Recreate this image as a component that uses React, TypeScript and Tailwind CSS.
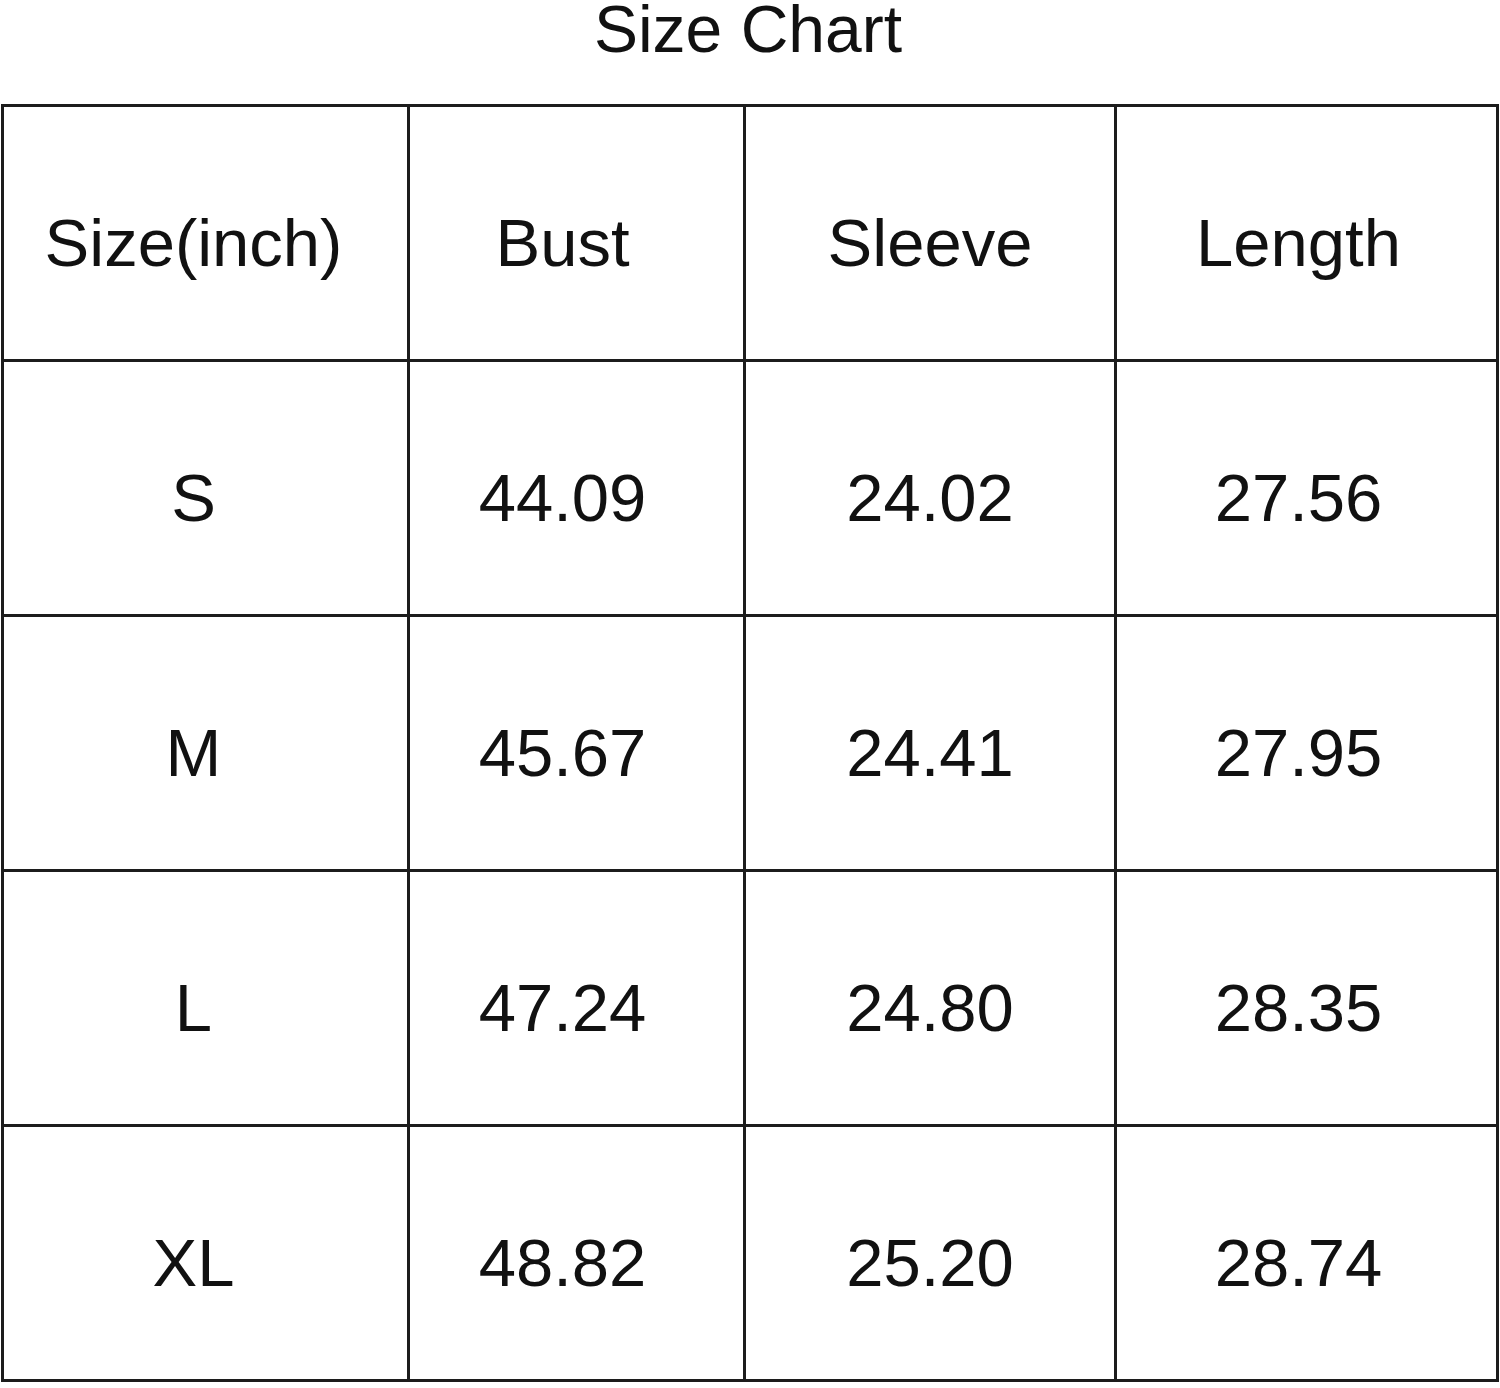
import React from "react";

const headers = ["Size(inch)", "Bust", "Sleeve", "Length"];

const rows = [
  ["S", "44.09", "24.02", "27.56"],
  ["M", "45.67", "24.41", "27.95"],
  ["L", "47.24", "24.80", "28.35"],
  ["XL", "48.82", "25.20", "28.74"],
];

// small nudges so each column's text sits where the chart has it
const colShift = ["pr-[24px]", "pr-[28px]", "pr-0", "pr-[16px]"];

function Cell({ text, col }: { text: string; col: number }) {
  return (
    <div
      className={`bg-white flex items-center justify-center pt-[20px] ${colShift[col]}`}
    >
      {text}
    </div>
  );
}

export default function App() {
  return (
    <div
      className="w-[1500px] h-[1388px] bg-white text-[#111] relative"
      style={{ fontFamily: '"Liberation Sans", Arial, sans-serif' }}
    >
      <div className="text-[66px] leading-[58px] text-center pr-[4px]">
        Size Chart
      </div>
      <div className="mt-[46px] ml-[1px] w-[1498px] grid grid-cols-[403px_333px_368px_379px] grid-rows-[repeat(5,252px)] gap-[3px] p-[3px] bg-[#1c1c1c] text-[67px] leading-normal">
        {headers.map((h, i) => (
          <Cell key={h} text={h} col={i} />
        ))}
        {rows.map((r) =>
          r.map((v, i) => <Cell key={r[0] + i} text={v} col={i} />)
        )}
      </div>
    </div>
  );
}
